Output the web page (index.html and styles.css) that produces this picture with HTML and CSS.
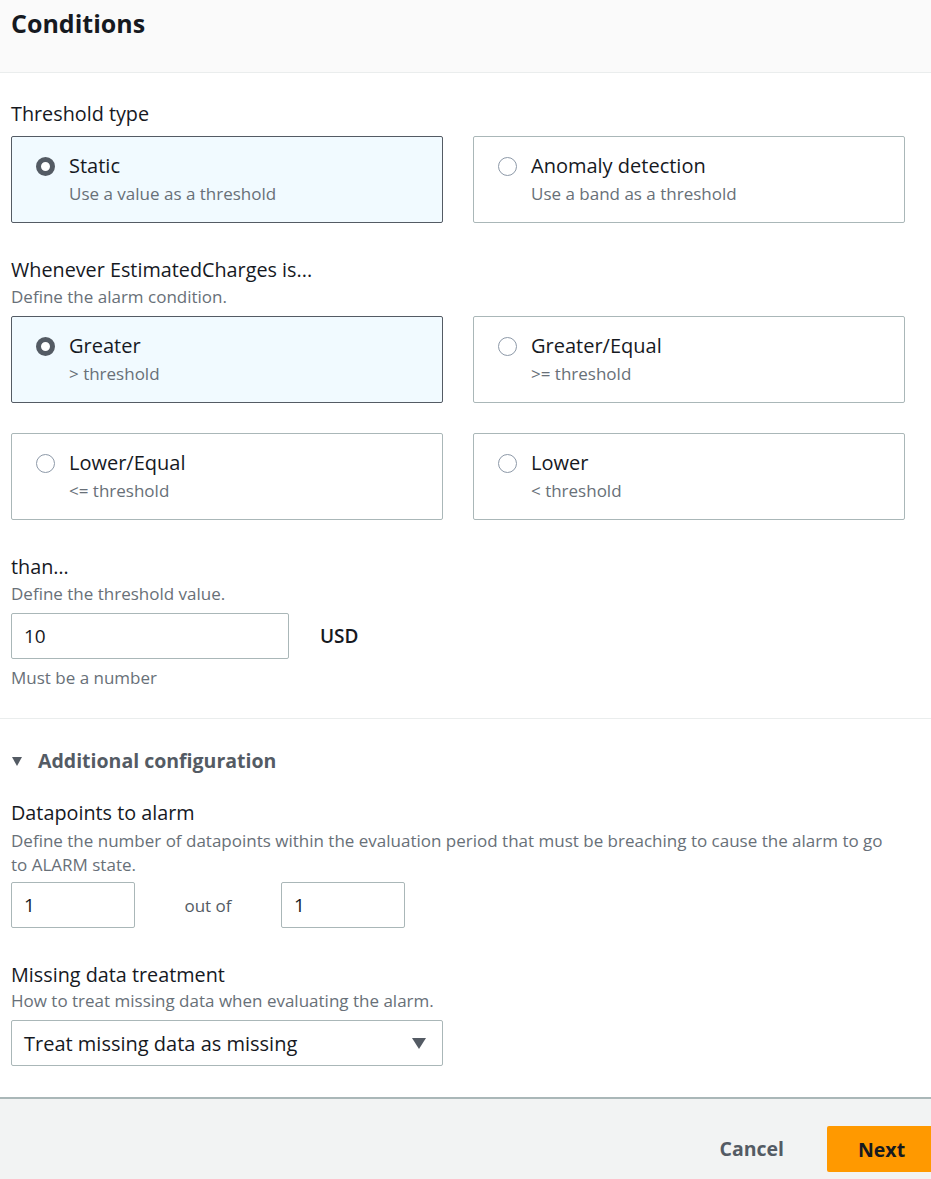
FILE: index.html
```html
<!DOCTYPE html>
<html>
<head>
<meta charset="utf-8">
<link rel="stylesheet" href="styles.css">
</head>
<body>
<div class="page">
  <header class="header"><h1>Conditions</h1></header>
  <main class="content">
    <section class="field f1">
      <div class="label">Threshold type</div>
      <div class="tiles">
        <div class="tile selected"><span class="radio on"></span><div><div class="tile-title">Static</div><div class="tile-desc">Use a value as a threshold</div></div></div>
        <div class="tile"><span class="radio"></span><div><div class="tile-title">Anomaly detection</div><div class="tile-desc">Use a band as a threshold</div></div></div>
      </div>
    </section>
    <section class="field f2">
      <div class="label">Whenever EstimatedCharges is...</div>
      <div class="desc">Define the alarm condition.</div>
      <div class="tiles">
        <div class="tile selected"><span class="radio on"></span><div><div class="tile-title">Greater</div><div class="tile-desc">&gt; threshold</div></div></div>
        <div class="tile"><span class="radio"></span><div><div class="tile-title">Greater/Equal</div><div class="tile-desc">&gt;= threshold</div></div></div>
        <div class="tile"><span class="radio"></span><div><div class="tile-title">Lower/Equal</div><div class="tile-desc">&lt;= threshold</div></div></div>
        <div class="tile"><span class="radio"></span><div><div class="tile-title">Lower</div><div class="tile-desc">&lt; threshold</div></div></div>
      </div>
    </section>
    <section class="field f3">
      <div class="label">than…</div>
      <div class="desc">Define the threshold value.</div>
      <div class="row">
        <div class="input wide">10</div>
        <span class="unit">USD</span>
      </div>
      <div class="hint">Must be a number</div>
    </section>
  </main>
  <div class="divider"></div>
  <section class="content additional">
    <div class="expander"><span class="caret"></span>Additional configuration</div>
    <section class="field f4">
      <div class="label">Datapoints to alarm</div>
      <div class="desc">Define the number of datapoints within the evaluation period that must be breaching to cause the alarm to go to ALARM state.</div>
      <div class="row">
        <div class="input small">1</div>
        <span class="outof">out of</span>
        <div class="input small">1</div>
      </div>
    </section>
    <section class="field f5">
      <div class="label">Missing data treatment</div>
      <div class="desc">How to treat missing data when evaluating the alarm.</div>
      <div class="select"><span>Treat missing data as missing</span><span class="sel-caret"></span></div>
    </section>
  </section>
  <footer class="footer">
    <span class="cancel">Cancel</span>
    <span class="next">Next</span>
  </footer>
</div>
</body>
</html>
```

FILE: styles.css
```css
* { box-sizing: border-box; }
html, body { margin: 0; padding: 0; background: #fff; }
body { font-family: "Open Sans", "Noto Sans", sans-serif; color: #16191f; width: 931px; height: 1179px; overflow: hidden; }
.page { display: flex; flex-direction: column; height: 1179px; }
.header { background: #fafafa; border-bottom: 1px solid #eaeded; height: 73px; padding: 5px 11px 0; }
.header h1 { margin: 0; font-size: 25px; font-weight: 700; line-height: 36px; color: #16191f; }
.content { padding: 0 26px 0 11px; }
.label { font-size: 19.8px; line-height: 26px; color: #16191f; }
.desc { font-size: 17px; line-height: 24px; color: #687078; margin-top: 2px; }
.f1 { padding-top: 28px; }
.f1 .label { margin-bottom: 9px; }
.tiles { display: grid; grid-template-columns: 432px 432px; column-gap: 30px; row-gap: 30px; }
.tile { height: 87px; border: 1px solid #aab7b8; border-radius: 2px; display: flex; align-items: flex-start; padding: 17px 0 0 24px; background: #fff; }
.tile.selected { background: #f1faff; border-color: #545b64; }
.radio { width: 19px; height: 19px; border-radius: 50%; border: 1.5px solid #8d99a8; flex: none; margin-top: 3px; margin-right: 14px; background: #fff; }
.radio.on { border: 5.5px solid #545b64; }
.tile-title { font-size: 20px; line-height: 24px; color: #16191f; }
.tile-desc { font-size: 17px; line-height: 20px; margin-top: 6px; color: #687078; }
.f2 { margin-top: 34px; }
.f2 .desc { margin-bottom: 7px; }
.f3 { margin-top: 34px; }
.f3 .desc { margin-bottom: 7px; }
.row { display: flex; align-items: center; }
.input { height: 46px; border: 1px solid #aab7b8; border-radius: 2px; font-size: 19px; line-height: 44px; padding: 0 12px; color: #16191f; background: #fff; }
.input.wide { width: 278px; }
.unit { margin-left: 31px; font-size: 19px; font-weight: 600; color: #16191f; }
.hint { font-size: 17px; line-height: 24px; color: #687078; margin-top: 7px; }
.divider { height: 1px; background: #eaeded; margin-top: 28px; }
.expander { display: flex; align-items: center; margin-top: 29px; font-size: 19.5px; font-weight: 700; color: #545b64; line-height: 26px; }
.caret { width: 0; height: 0; border-left: 5.5px solid transparent; border-right: 5.5px solid transparent; border-top: 9px solid #545b64; margin: 0 16px 0 1px; }
.f4 { margin-top: 26px; }
.f4 .desc { margin-top: 3px; margin-bottom: 5px; max-width: 886px; }
.input.small { width: 124px; }
.outof { font-size: 17px; color: #545b64; width: 146px; text-align: center; }
.f5 { margin-top: 34px; }
.f5 .desc { margin-top: 1px; margin-bottom: 7px; }
.select { width: 432px; height: 46px; border: 1px solid #aab7b8; border-radius: 2px; display: flex; align-items: center; justify-content: space-between; padding: 0 16px 0 12px; font-size: 20px; color: #16191f; }
.sel-caret { width: 0; height: 0; border-left: 7.5px solid transparent; border-right: 7.5px solid transparent; border-top: 11px solid #545b64; }
.footer { margin-top: auto; height: 82px; background: #f2f3f3; border-top: 2px solid #aab7b8; display: flex; align-items: flex-start; justify-content: flex-end; padding-top: 27px; }
.cancel { font-size: 19.5px; font-weight: 700; color: #545b64; margin-right: 43px; line-height: 46px; }
.next { background: #ff9900; height: 46px; width: 104px; display: flex; align-items: center; padding-left: 31px; font-size: 19.5px; font-weight: 700; color: #16191f; border-radius: 2px 0 0 2px; }
```
